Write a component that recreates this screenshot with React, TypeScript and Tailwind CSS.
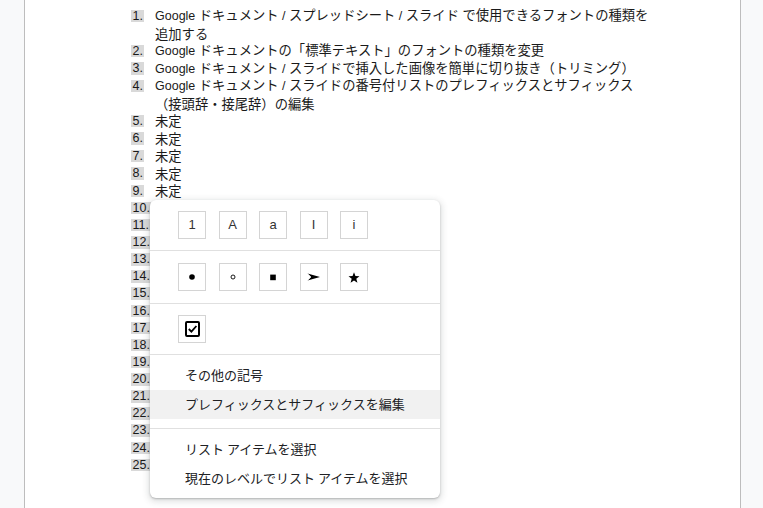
import React from 'react'

// Latin runs in the doc body are set a little smaller than the Japanese glyphs
function L({ children }: { children: React.ReactNode }) {
  return <span className="font-['Liberation_Sans'] text-[12.5px]">{children}</span>
}

function Num({ n }: { n: number }) {
  return (
    <span className="font-['Liberation_Sans'] text-[12.5px] leading-[12.5px] bg-[#d9d9d9] px-[1.5px] inline-block">
      {n}.
    </span>
  )
}

type Row = { n: number; lines: React.ReactNode[] }

const rows: Row[] = [
  {
    n: 1,
    lines: [
      <>
        <L>Google </L>ドキュメント<L> / </L>スプレッドシート<L> / </L>スライド<L> </L>で使用できるフォントの種類を
      </>,
      <>追加する</>,
    ],
  },
  {
    n: 2,
    lines: [
      <>
        <L>Google </L>ドキュメントの「標準テキスト」のフォントの種類を変更
      </>,
    ],
  },
  {
    n: 3,
    lines: [
      <>
        <L>Google </L>ドキュメント<L> / </L>スライドで挿入した画像を簡単に切り抜き（トリミング）
      </>,
    ],
  },
  {
    n: 4,
    lines: [
      <>
        <L>Google </L>ドキュメント<L> / </L>スライドの番号付リストのプレフィックスとサフィックス
      </>,
      <>（接頭辞・接尾辞）の編集</>,
    ],
  },
  { n: 5, lines: [<>未定</>] },
  { n: 6, lines: [<>未定</>] },
  { n: 7, lines: [<>未定</>] },
  { n: 8, lines: [<>未定</>] },
  { n: 9, lines: [<>未定</>] },
]

const emptyRows = Array.from({ length: 16 }, (_, i) => i + 10)

function Box({ children }: { children: React.ReactNode }) {
  return (
    <div className="w-[28px] h-[28px] border border-[#d4d4d4] flex items-center justify-center font-['Liberation_Sans'] text-[13px] text-[#333]">
      {children}
    </div>
  )
}

function Item({ label, active }: { label: string; active?: boolean }) {
  return (
    <div className={active ? 'h-[29px] flex items-center pl-[35px] pb-[2px] bg-[#f1f1f1]' : 'h-[29px] flex items-center pl-[35px] pb-[2px]'}>
      {label}
    </div>
  )
}

function ListMenu() {
  return (
    <div className="absolute left-[125px] top-[200px] w-[290px] bg-white rounded-md shadow-[0_2px_6px_2px_rgba(60,64,67,0.15),0_1px_2px_0_rgba(60,64,67,0.3)] font-['Noto_Sans_CJK_JP',sans-serif] text-[13px] text-[#202124]">
      {/* numbering styles */}
      <div className="flex gap-[12.5px] pl-[28px] pt-[11px] pb-[11px] border-b border-[#e0e0e0]">
        <Box>1</Box>
        <Box>A</Box>
        <Box>a</Box>
        <Box>I</Box>
        <Box>i</Box>
      </div>

      {/* bullet styles */}
      <div className="flex gap-[12.5px] pl-[28px] pt-[12px] pb-[12px] border-b border-[#e0e0e0]">
        <Box>
          <svg width="8" height="8" viewBox="0 0 8 8">
            <circle cx="4" cy="4" r="2.8" fill="#000" />
          </svg>
        </Box>
        <Box>
          <svg width="8" height="8" viewBox="0 0 8 8">
            <circle cx="4" cy="4" r="2" fill="none" stroke="#000" strokeWidth="0.9" />
          </svg>
        </Box>
        <Box>
          <svg width="8" height="8" viewBox="0 0 8 8">
            <rect x="1.2" y="1.6" width="5.6" height="5.6" fill="#000" />
          </svg>
        </Box>
        <Box>
          <svg width="14" height="8" viewBox="0 0 14 8">
            <path d="M0.5 0.5 L13 4 L0.5 7.5 L4 4 Z" fill="#000" />
            <path d="M0.5 0.5 L4 4 L0.5 7.5" fill="none" stroke="#fff" strokeWidth="0.6" />
          </svg>
        </Box>
        <Box>
          <svg width="12" height="11" viewBox="0 0 24 23">
            <path d="M12 0.5 L15 8.5 L23.5 8.8 L16.8 14 L19.2 22.5 L12 17.6 L4.8 22.5 L7.2 14 L0.5 8.8 L9 8.5 Z" fill="#000" />
          </svg>
        </Box>
      </div>

      {/* checklist */}
      <div className="flex pl-[28px] pt-[11px] pb-[11px] border-b border-[#e0e0e0]">
        <Box>
          <svg width="15" height="16" viewBox="0 0 15 16">
            <rect x="1" y="1" width="13" height="14" rx="1" fill="none" stroke="#000" strokeWidth="2" />
            <path d="M3.8 8 L6.4 10.6 L11.4 5" fill="none" stroke="#000" strokeWidth="1.8" />
          </svg>
        </Box>
      </div>

      {/* actions */}
      <div className="pt-[6px] pb-[9px] border-b border-[#e0e0e0]">
        <Item label="その他の記号" />
        <Item label="プレフィックスとサフィックスを編集" active />
      </div>
      <div className="pt-[6px] pb-[5px]">
        <Item label="リスト アイテムを選択" />
        <Item label="現在のレベルでリスト アイテムを選択" />
      </div>
    </div>
  )
}

export default function App() {
  return (
    <div className="flex h-[508px] w-[763px] overflow-hidden bg-[#f8f9fa]">
      <div className="w-[24px] shrink-0" />

      <div className="relative w-[717px] shrink-0 bg-white border-x border-[#bdbdbd] pl-[106px] pt-[7px] font-['Noto_Sans_CJK_JP',sans-serif] text-[13.3px] text-[#1a1a1a]">
        {rows.map((row) =>
          row.lines.map((line, i) => (
            <div key={`${row.n}-${i}`} className="flex items-center h-[17.5px] whitespace-nowrap">
              <div className="w-[24px] shrink-0 flex items-center">{i === 0 ? <Num n={row.n} /> : null}</div>
              <div className="leading-[17.5px]">{line}</div>
            </div>
          ))
        )}

        {emptyRows.map((n) => (
          <div key={n} className="flex items-center h-[17.13px]">
            <div className="w-[24px] shrink-0 flex items-center">
              <Num n={n} />
            </div>
          </div>
        ))}

        <ListMenu />
      </div>

      <div className="flex-1" />
    </div>
  )
}
